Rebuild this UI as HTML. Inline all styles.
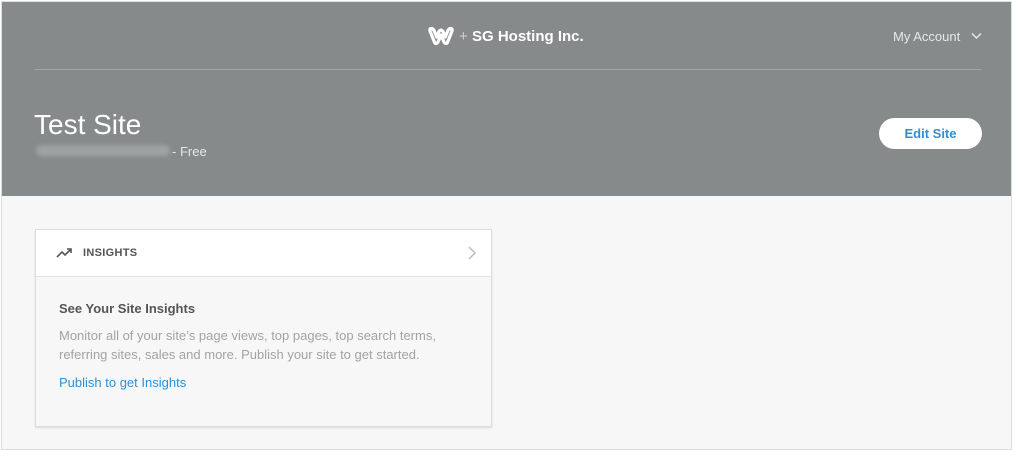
<!DOCTYPE html>
<html><head><style>
*{margin:0;padding:0;box-sizing:border-box}
body{width:1013px;height:451px;background:#fff;font-family:"Liberation Sans",sans-serif;position:relative;overflow:hidden}
.frame{position:absolute;left:1px;top:1px;width:1011px;height:449px;border:1px solid #ddd;background:#f7f7f7}
.hdr{position:absolute;left:2px;top:2px;width:1009px;height:194px;background:#878a8b}
.line{position:absolute;left:35px;top:69px;width:946px;height:1px;background:#a3a6a7}
.abs{position:absolute;white-space:nowrap}
.card{position:absolute;left:35px;top:229px;width:457px;height:198px;background:#f7f7f7;border:1px solid #ddd;box-shadow:0 1px 2px rgba(0,0,0,.12)}
.ch{position:absolute;left:0;top:0;width:455px;height:47px;background:#fff;border-bottom:1px solid #e2e2e2}
</style></head><body>
<div class="frame"></div>
<div class="hdr"></div>
<div class="line"></div>
<svg class="abs" style="left:427px;top:25px" width="28" height="22" viewBox="0 0 26 20"><path d="M4 3 Q2 3 3 6 L7 16 Q8 18 10 16 L13 9 L16 16 Q18 18 19 16 L23 6 Q24 3 22 3 Q20 3 19 6 L17 11 L15 6 Q13 3 11 6 L9 11 L7 6 Q6 3 4 3Z" fill="none" stroke="#fff" stroke-width="3" stroke-linejoin="round"/></svg>
<div class="abs" style="left:459px;top:28px;color:#d0d2d3;font-size:15px">+</div>
<div class="abs" style="left:472px;top:28px;color:#fff;font-size:15px;font-weight:bold">SG Hosting Inc.</div>
<div class="abs" style="left:893px;top:29px;color:#e6e7e8;font-size:13px">My Account</div>
<svg class="abs" style="left:971px;top:32px" width="11" height="8"><path d="M1 1.5 L5.5 6 L10 1.5" fill="none" stroke="#e6e7e8" stroke-width="1.5"/></svg>
<div class="abs" style="left:34px;top:109px;color:#fff;font-size:28px">Test Site</div>
<div class="abs" style="left:36px;top:145px;width:134px;height:11px;background:#9fa2a3;border-radius:5px;filter:blur(2px)"></div>
<div class="abs" style="left:172px;top:144px;color:#e6e7e8;font-size:13px">- Free</div>
<div class="abs" style="left:879px;top:118px;width:103px;height:31px;background:#fff;border-radius:16px;color:#2b8fdb;font-size:13px;font-weight:bold;text-align:center;line-height:31px">Edit Site</div>
<div class="card">
<div class="ch">
<svg class="abs" style="left:20px;top:17px" width="18" height="12"><path d="M1 10 L6 5 L9 8 L15 2 M11 2 L15 2 L15 6" fill="none" stroke="#555" stroke-width="1.6"/></svg>
<div class="abs" style="left:47px;top:17px;color:#555;font-size:11px;font-weight:bold;letter-spacing:.3px">INSIGHTS</div>
<svg class="abs" style="left:432px;top:16px" width="8" height="14"><path d="M1 1 L7 7 L1 13" fill="none" stroke="#bbb" stroke-width="1.4"/></svg>
</div>
<div class="abs" style="left:23px;top:71px;color:#555;font-size:13px;font-weight:bold">See Your Site Insights</div>
<div class="abs" style="left:23px;top:96px;color:#a3a3a3;font-size:13px;line-height:19px">Monitor all of your site’s page views, top pages, top search terms,<br>referring sites, sales and more. Publish your site to get started.</div>
<div class="abs" style="left:23px;top:145px;color:#2b8fdb;font-size:13px">Publish to get Insights</div>
</div>
</body></html>
